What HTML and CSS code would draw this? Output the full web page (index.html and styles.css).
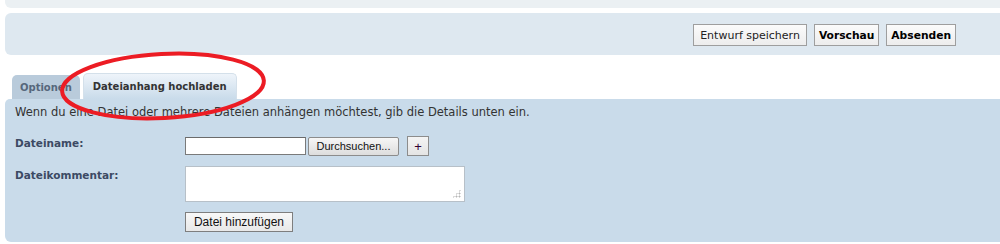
FILE: index.html
```html
<!DOCTYPE html>
<html lang="de">
<head>
<meta charset="utf-8">
<title>Dateianhang hochladen</title>
<link rel="stylesheet" href="styles.css">
</head>
<body>
<div class="page">
  <div class="panel-top"></div>
  <div class="panel-actions">
    <button class="btn">Entwurf speichern</button>
    <button class="btn btn-bold">Vorschau</button>
    <button class="btn btn-bold">Absenden</button>
  </div>
  <div class="tabs">
    <div class="tab">Optionen</div>
    <div class="tab tab-active">Dateianhang hochladen</div>
  </div>
  <div class="panel-main">
    <p class="intro">Wenn du eine Datei oder mehrere Dateien anhängen möchtest, gib die Details unten ein.</p>
    <div class="row">
      <label class="label">Dateiname:</label>
      <div class="field file-field">
        <span class="file-box"></span>
        <button class="native-btn browse">Durchsuchen...</button>
        <button class="native-btn plus">+</button>
      </div>
    </div>
    <div class="row row-comment">
      <label class="label">Dateikommentar:</label>
      <div class="field">
        <div class="textarea"><span class="grip"></span></div>
      </div>
    </div>
    <div class="row row-add">
      <span class="label"></span>
      <div class="field"><button class="native-btn add">Datei hinzufügen</button></div>
    </div>
  </div>
  <svg class="annotation" width="230" height="80" viewBox="0 0 230 80" aria-hidden="true">
    <ellipse cx="115" cy="40" rx="101" ry="32" fill="none" stroke="#ec1c24" stroke-width="4" transform="rotate(-3 115 40)"/>
  </svg>
</div>
</body>
</html>
```
FILE: styles.css
```css
* { box-sizing: border-box; }
html, body { margin: 0; padding: 0; background: #ffffff; }
body {
  font-family: "DejaVu Sans", Verdana, sans-serif;
  font-size: 11px;
  color: #333333;
  width: 1000px;
  height: 244px;
  overflow: hidden;
}
.page { position: relative; padding-left: 5px; }

.panel-top {
  height: 8px;
  background: #ebf0f3;
  border-radius: 0 0 0 6px;
  margin-right: -8px;
}

.panel-actions {
  margin-top: 5px;
  height: 42px;
  background: #dee8f0;
  border-radius: 6px 0 0 6px;
  margin-right: -8px;
  display: flex;
  justify-content: flex-end;
  align-items: center;
  gap: 7px;
  padding-right: 52px;
}

.btn {
  font-family: "DejaVu Sans", Verdana, sans-serif;
  font-size: 11px;
  color: #222222;
  height: 22px;
  padding: 0 6px;
  background: linear-gradient(#fbfbfb, #ededed);
  border: 1px solid #9e9e9e;
  border-radius: 0;
  margin-top: 2px;
}
.btn-bold { font-weight: bold; color: #000; padding: 0 4px; font-size: 10.7px; }

.tabs {
  display: flex;
  gap: 3px;
  margin-top: 19px;
  padding-left: 7px;
  height: 25px;
  align-items: flex-end;
}
.tab {
  height: 24px;
  padding: 0 8px;
  display: flex;
  align-items: center;
  background: #b9cbdb;
  color: #56677b;
  font-weight: bold;
  font-size: 10px;
  border-radius: 5px 5px 0 0;
}
.tab-active {
  height: 26px;
  padding: 0 9px;
  color: #333333;
  background: linear-gradient(#eef4fa, #c9dbea);
  border: 1px solid #d4e0ea;
  border-bottom: none;
}

.panel-main {
  background: #c9dbea;
  height: 143px;
  margin-right: -8px;
  border-radius: 5px 0 0 6px;
  padding: 7px 10px 0;
}
.intro { margin: 0 0 18px; line-height: 13px; font-size: 11.5px; }

.row { display: flex; align-items: flex-start; }
.label {
  width: 170px;
  flex: none;
  font-weight: bold;
  font-size: 10.5px;
  color: #3c4a64;
  line-height: 13px;
}

.file-field { display: flex; align-items: center; margin-top: -1px; }
.file-box {
  width: 121px;
  height: 18px;
  background: #fff;
  border: 1px solid #7a7a7a;
  border-top-color: #6b6b6b;
}
.native-btn {
  font-family: "Liberation Sans", Arial, sans-serif;
  font-size: 11px;
  color: #111;
  background: linear-gradient(#f6f6f6, #dddddd);
  border: 1px solid #8c8c8c;
  border-radius: 2px;
  padding: 0 6px;
  height: 19px;
}
.browse { width: 91px; margin-left: 2px; }
.plus {
  margin-left: 8px;
  width: 22px;
  height: 20px;
  padding: 0;
  border-radius: 0;
  background: linear-gradient(#f4f4f4, #e4e4e4);
  color: #300030;
  font-size: 13px;
}

.row-comment { margin-top: 10px; }
.row-comment .label { padding-top: 3px; }
.textarea {
  position: relative;
  width: 280px;
  height: 36px;
  background: #fff;
  border: 1px solid #b7c0c8;
}
.grip {
  position: absolute;
  right: 3px;
  bottom: 3px;
  width: 9px;
  height: 9px;
  background-image: radial-gradient(circle, #b5b5b5 0.9px, transparent 1.1px);
  background-size: 3px 3px;
  clip-path: polygon(100% 0, 100% 100%, 0 100%);
}

.row-add { margin-top: 10px; }
.add {
  height: 20px;
  width: 108px;
  padding: 0;
  border-radius: 0;
  border-color: #7e7e7e;
  background: linear-gradient(#f8f8f8, #e8e8e8);
  font-size: 12px;
}

.annotation {
  position: absolute;
  left: 48px;
  top: 46px;
  pointer-events: none;
}
```
